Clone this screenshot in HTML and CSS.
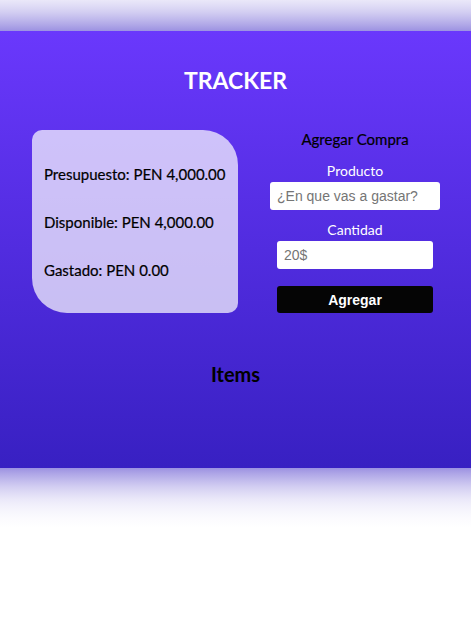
FILE: index.html
```html
<!DOCTYPE html>
<html lang="es">
<head>
  <meta charset="UTF-8">
  <meta name="viewport" content="width=device-width, initial-scale=1.0">
  <title>Tracker</title>
  <link rel="stylesheet" href="styles.css">
</head>
<body>

  <!-- Main tracker panel -->
  <section class="tracker">
    <h1 class="tracker-title">TRACKER</h1>

    <div class="tracker-row">
      <!-- Budget summary -->
      <div class="summary-card">
        <p>Presupuesto: PEN 4,000.00</p>
        <p>Disponible: PEN 4,000.00</p>
        <p>Gastado: PEN 0.00</p>
      </div>

      <!-- Add purchase form -->
      <form class="purchase-form">
        <h3>Agregar Compra</h3>
        <label for="producto">Producto</label>
        <input type="text" id="producto" class="input-wide" placeholder="¿En que vas a gastar?">
        <label for="cantidad">Cantidad</label>
        <input type="number" id="cantidad" class="input-narrow" placeholder="20$">
        <button type="button" class="add-button">Agregar</button>
      </form>
    </div>

    <h2 class="items-title">Items</h2>
    <ul class="items-list"></ul>
  </section>

</body>
</html>
```

FILE: styles.css
```css
/* General Styles */
body {
  margin: 0;
  min-height: 100vh;
  font-family: Lato, "Open Sans", sans-serif;
  /* soft glow above and below the panel */
  background:
    linear-gradient(rgba(58, 37, 196, 0.107), rgba(58, 37, 196, 0.159) 6px, rgba(58, 37, 196, 0.224) 12px,
      rgba(58, 37, 196, 0.316) 19px, rgba(58, 37, 196, 0.405) 25px, rgba(58, 37, 196, 0.5)) 0 0 / 100% 31px no-repeat,
    linear-gradient(rgba(58, 37, 196, 0.5), rgba(58, 37, 196, 0.405) 6px, rgba(58, 37, 196, 0.316) 12px,
      rgba(58, 37, 196, 0.224) 19px, rgba(58, 37, 196, 0.159) 25px, rgba(58, 37, 196, 0.107) 31px,
      rgba(58, 37, 196, 0.069) 37px, rgba(58, 37, 196, 0.039) 44px, rgba(58, 37, 196, 0.02) 50px,
      rgba(58, 37, 196, 0)) 0 468px / 100% 60px no-repeat,
    #ffffff;
}

.tracker {
  margin-top: 31px;
  padding-top: 37px;
  height: 437px;
  box-sizing: border-box;
  background: linear-gradient(to bottom, #6a38fc, #3820c2);
}

.tracker-title {
  margin: 0;
  text-align: center;
  color: #ffffff;
  font-size: 23px;
  font-weight: 700;
  line-height: 24px;
}

.tracker-row {
  display: flex;
  justify-content: space-between;
  align-items: flex-start;
  padding: 0 31px 0 32px;
  margin-top: 38px;
}

/* Budget card */
.summary-card {
  width: 206px;
  height: 183px;
  box-sizing: border-box;
  padding: 34px 0 0 12px;
  background-color: rgba(255, 255, 255, 0.7);
  border-radius: 10px 35px 10px 35px;
}

.summary-card p {
  margin: 0 0 28px;
  font-size: 15px;
  line-height: 20px;
  color: #000000;
  -webkit-text-stroke: 0.2px #000000;
}

/* Purchase form */
.purchase-form {
  width: 170px;
  display: flex;
  flex-direction: column;
  align-items: center;
}

.purchase-form h3 {
  margin: 0 0 14px;
  font-size: 15px;
  font-weight: 400;
  line-height: 18px;
  color: #000000;
  -webkit-text-stroke: 0.2px #000000;
}

.purchase-form label {
  font-size: 14px;
  line-height: 18px;
  color: #ffffff;
  margin-bottom: 2px;
}

.purchase-form input {
  height: 28px;
  box-sizing: border-box;
  border: none;
  border-radius: 3px;
  padding: 0 7px;
  font-family: "Liberation Sans", Arial, sans-serif;
  font-size: 14px;
  color: #333333;
  background-color: #ffffff;
  margin-bottom: 11px;
}

.purchase-form input::placeholder {
  color: #757575;
}

.input-wide {
  width: 170px;
}

.input-narrow {
  width: 156px;
  margin-bottom: 17px !important;
}

.add-button {
  width: 156px;
  height: 27px;
  border: none;
  border-radius: 3px;
  background-color: #050505;
  color: #ffffff;
  font-family: "Liberation Sans", Arial, sans-serif;
  font-size: 14px;
  font-weight: 700;
  cursor: pointer;
}

/* Items */
.items-title {
  margin: 49px 0 0;
  text-align: center;
  font-size: 20px;
  font-weight: 700;
  line-height: 24px;
  color: #000000;
}

.items-list {
  margin: 0;
  padding: 0;
  list-style: none;
}
```
